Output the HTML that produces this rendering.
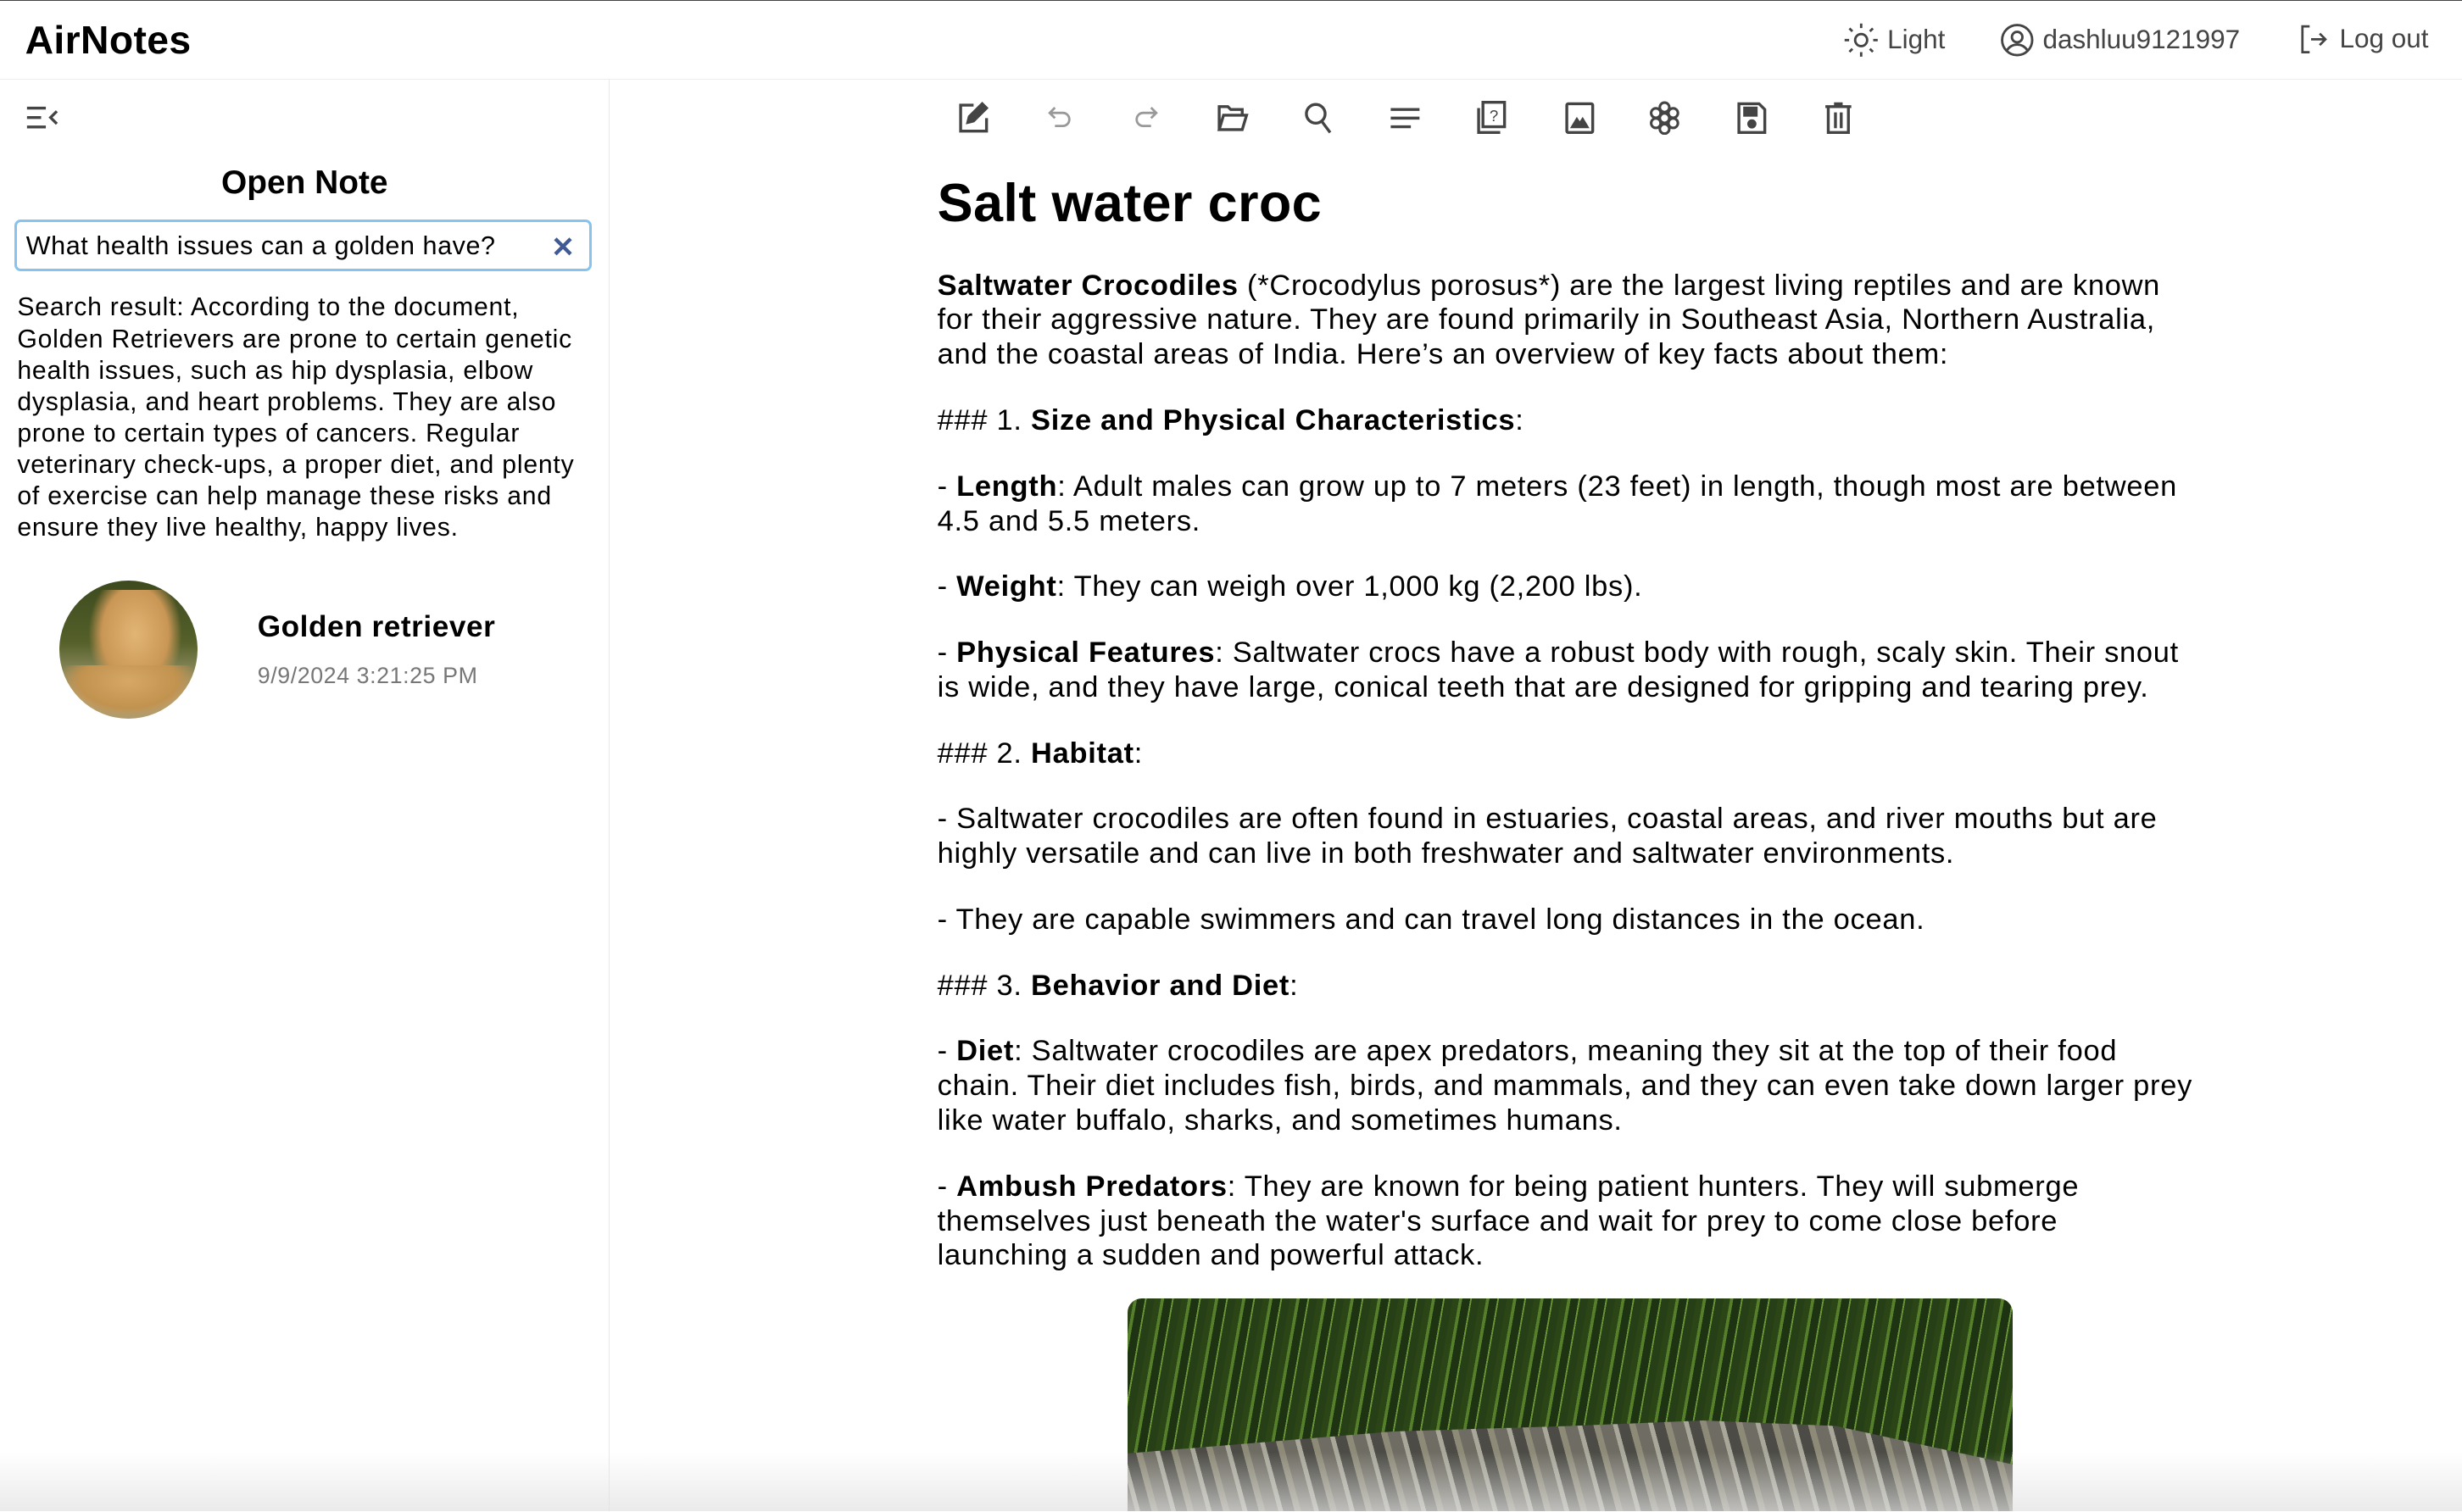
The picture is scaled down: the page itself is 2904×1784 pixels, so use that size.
<!DOCTYPE html>
<html><head><meta charset="utf-8">
<style>
html,body{margin:0;padding:0;background:#fff;}
body{width:2904px;height:1784px;overflow:hidden;position:relative;}
#r{zoom:1.852;width:1568px;height:963px;position:relative;font-family:"Liberation Sans",Arial,sans-serif;color:#000;overflow:hidden;}
.a{position:absolute;}
.hdr{left:0;top:0;width:1568px;height:51px;border-top:1px solid #444;border-bottom:1px solid #ececec;box-sizing:border-box;}
.logo{left:16px;top:11px;font-size:25px;font-weight:bold;letter-spacing:0.2px;}
.hi{top:14px;font-size:17px;color:#444;display:flex;align-items:center;gap:5px;}
.side{left:0;top:51px;width:388px;height:912px;border-right:1px solid #e8e8e8;box-sizing:border-box;}
.ttl{left:0;width:388px;top:105px;text-align:center;font-size:21px;font-weight:bold;}
.inp{left:9px;top:140px;width:368px;height:33px;border:2px solid #86c3ef;border-radius:4px;box-sizing:border-box;font-size:16.5px;padding:6px 0 0 6px;letter-spacing:0.3px;}
.res{left:11px;top:186px;width:375px;font-size:16.3px;line-height:20px;letter-spacing:0.42px;}
.ct{left:597px;top:0;width:840px;}
.ct p{margin:0 0 20px 0;font-size:18.6px;line-height:22px;letter-spacing:0.39px;white-space:nowrap;}
.tb svg{position:absolute;top:64px;}
.img{left:718px;top:827px;width:564px;height:136px;border-radius:9px 9px 0 0;overflow:hidden;
background:repeating-linear-gradient(100deg,#2c4516 0 4px,#557f2a 4px 6px,#1d3312 6px 11px,#6b9638 11px 12px,#263f17 12px 17px);}
.croc{left:0;top:78px;width:564px;height:70px;background:repeating-linear-gradient(75deg,#6f6d63 0 8px,#a8a79a 8px 11px,#4c4b45 11px 18px,#8d8a78 18px 22px);clip-path:polygon(0 30%,15% 20%,30% 10%,50% 5%,65% 0,80% 5%,100% 40%,100% 100%,0 100%);}
.shade{left:0;top:925px;width:1568px;height:38px;background:linear-gradient(180deg,rgba(230,230,230,0),rgba(225,225,225,.7));}
</style></head><body><div id="r">
<div class="a hdr"></div>
<div class="a logo">AirNotes</div>
<div class="a hi" style="left:1174px"><svg width="23" height="23" viewBox="0 0 24 24" fill="none" stroke="#444" stroke-width="1.6"><circle cx="12" cy="12" r="4"/><path d="M12 1v3M12 20v3M1 12h3M20 12h3M4.2 4.2l2 2M17.8 17.8l2 2M4.2 19.8l2-2M17.8 6.2l2-2"/></svg>Light</div>
<div class="a hi" style="left:1273px"><svg width="23" height="23" viewBox="0 0 24 24" fill="none" stroke="#444" stroke-width="1.6"><circle cx="12" cy="12" r="10"/><circle cx="12" cy="10" r="3.5"/><path d="M5 19c2-3 4.5-4 7-4s5 1 7 4"/></svg>dashluu9121997</div>
<div class="a hi" style="left:1463px"><svg width="22" height="22" viewBox="0 0 24 24" fill="none" stroke="#444" stroke-width="1.6"><path d="M9 3H4v18h5M10 12h10M16 8l4 4-4 4"/></svg>Log out</div>

<div class="a side"></div>
<svg class="a" style="left:16px;top:66px" width="22" height="18" viewBox="0 0 22 18" stroke="#444" stroke-width="1.8" fill="none"><path d="M1 3h12M1 9h9M1 15h12M20 5l-4 4 4 4"/></svg>
<div class="a ttl">Open Note</div>
<div class="a inp">What health issues can a golden have?<span style="position:absolute;right:9px;top:5px;color:#3f5a95;font-weight:bold;font-size:18px">✕</span></div>
<div class="a res">Search result: According to the document,<br>Golden Retrievers are prone to certain genetic<br>health issues, such as hip dysplasia, elbow<br>dysplasia, and heart problems. They are also<br>prone to certain types of cancers. Regular<br>veterinary check-ups, a proper diet, and plenty<br>of exercise can help manage these risks and<br>ensure they live healthy, happy lives.</div>
<div class="a" style="left:38px;top:370px;width:88px;height:88px;border-radius:50%;overflow:hidden;background:linear-gradient(180deg,#3c4a1e 0,#55602a 45%,#b9ad88 85%,#a89c72 100%)">
<div class="a" style="left:18px;top:6px;width:60px;height:70px;background:radial-gradient(ellipse at 50% 40%,#e2b574 0,#c99655 50%,rgba(201,150,85,0) 70%)"></div>
<div class="a" style="left:0px;top:54px;width:88px;height:34px;background:radial-gradient(ellipse at 50% 30%,#d6a866 0,#c2924f 50%,rgba(0,0,0,0) 72%)"></div></div>
<div class="a" style="left:164px;top:389px;font-size:19px;font-weight:bold;letter-spacing:0.3px">Golden retriever</div>
<div class="a" style="left:164px;top:422px;font-size:14.5px;color:#777;letter-spacing:0.3px">9/9/2024 3:21:25 PM</div>

<div class="tb">
<svg style="left:609px" width="22" height="22" viewBox="0 0 24 24" fill="none" stroke="#444" stroke-width="2"><path d="M12 3H3v18h18v-9"/><path d="M18 2l3 3-9 9-4 1 1-4z" fill="#444"/></svg>
<svg style="left:665px" width="20" height="22" viewBox="0 0 24 24" fill="none" stroke="#999" stroke-width="1.8"><path d="M4 8h10a5 5 0 010 10H8M8 4L4 8l4 4"/></svg>
<svg style="left:720px" width="20" height="22" viewBox="0 0 24 24" fill="none" stroke="#999" stroke-width="1.8"><path d="M20 8H10a5 5 0 000 10h6M16 4l4 4-4 4"/></svg>
<svg style="left:774px" width="22" height="22" viewBox="0 0 24 24" fill="none" stroke="#444" stroke-width="2"><path d="M3 20V4h6l2 2h8v4M3 20l3-10h16l-3 10z"/></svg>
<svg style="left:829px" width="22" height="22" viewBox="0 0 24 24" fill="none" stroke="#444" stroke-width="2"><circle cx="10" cy="9" r="6.5"/><path d="M14 14l6 8"/></svg>
<svg style="left:884px" width="22" height="22" viewBox="0 0 24 24" fill="none" stroke="#444" stroke-width="2"><path d="M2 6h20M2 12h20M2 18h14"/></svg>
<svg style="left:939px" width="22" height="22" viewBox="0 0 24 24" fill="none" stroke="#444" stroke-width="2"><rect x="6" y="1" width="15" height="17"/><path d="M3 5v17h15"/><text x="10.5" y="14" font-size="11" fill="#444" stroke="none" font-family="Liberation Sans">?</text></svg>
<svg style="left:995px" width="22" height="22" viewBox="0 0 24 24" fill="none" stroke="#444" stroke-width="2"><rect x="3" y="2" width="18" height="20" rx="1"/><path d="M7 18l3-5 2 3 2-3 3 5z" fill="#444"/></svg>
<svg style="left:1049px" width="22" height="22" viewBox="0 0 24 24" fill="none" stroke="#444" stroke-width="1.8"><circle cx="12" cy="4.5" r="3.3"/><circle cx="12" cy="19.5" r="3.3"/><circle cx="6" cy="8.5" r="3.3"/><circle cx="18" cy="8.5" r="3.3"/><circle cx="6" cy="15.5" r="3.3"/><circle cx="18" cy="15.5" r="3.3"/><circle cx="12" cy="12" r="3.3"/></svg>
<svg style="left:1105px" width="22" height="22" viewBox="0 0 24 24" fill="none" stroke="#444" stroke-width="2"><path d="M3 2h14l4 4v16H3z"/><rect x="7" y="5" width="8" height="5" fill="#444"/><circle cx="12" cy="16" r="2.2" fill="#444"/></svg>
<svg style="left:1160px" width="22" height="22" viewBox="0 0 24 24" fill="none" stroke="#444" stroke-width="2"><path d="M3 4h18M9 2h6M5 4v18h14V4M10 8v11M14 8v11"/></svg>
</div>

<div class="a ct">
<div style="position:absolute;top:110px;font-size:34px;font-weight:bold;white-space:nowrap;letter-spacing:0.2px">Salt water croc</div>
<div style="position:absolute;top:171px;width:840px">
<p><b>Saltwater Crocodiles</b> (*Crocodylus porosus*) are the largest living reptiles and are known<br>for their aggressive nature. They are found primarily in Southeast Asia, Northern Australia,<br>and the coastal areas of India. Here’s an overview of key facts about them:</p>
<p>### 1. <b>Size and Physical Characteristics</b>:</p>
<p>- <b>Length</b>: Adult males can grow up to 7 meters (23 feet) in length, though most are between<br>4.5 and 5.5 meters.</p>
<p>- <b>Weight</b>: They can weigh over 1,000 kg (2,200 lbs).</p>
<p>- <b>Physical Features</b>: Saltwater crocs have a robust body with rough, scaly skin. Their snout<br>is wide, and they have large, conical teeth that are designed for gripping and tearing prey.</p>
<p>### 2. <b>Habitat</b>:</p>
<p>- Saltwater crocodiles are often found in estuaries, coastal areas, and river mouths but are<br>highly versatile and can live in both freshwater and saltwater environments.</p>
<p>- They are capable swimmers and can travel long distances in the ocean.</p>
<p>### 3. <b>Behavior and Diet</b>:</p>
<p>- <b>Diet</b>: Saltwater crocodiles are apex predators, meaning they sit at the top of their food<br>chain. Their diet includes fish, birds, and mammals, and they can even take down larger prey<br>like water buffalo, sharks, and sometimes humans.</p>
<p style="margin:0">- <b>Ambush Predators</b>: They are known for being patient hunters. They will submerge<br>themselves just beneath the water's surface and wait for prey to come close before<br>launching a sudden and powerful attack.</p>
</div></div>
<div class="a img"><div class="a croc"></div></div>
<div class="a shade"></div>
</div></body></html>
